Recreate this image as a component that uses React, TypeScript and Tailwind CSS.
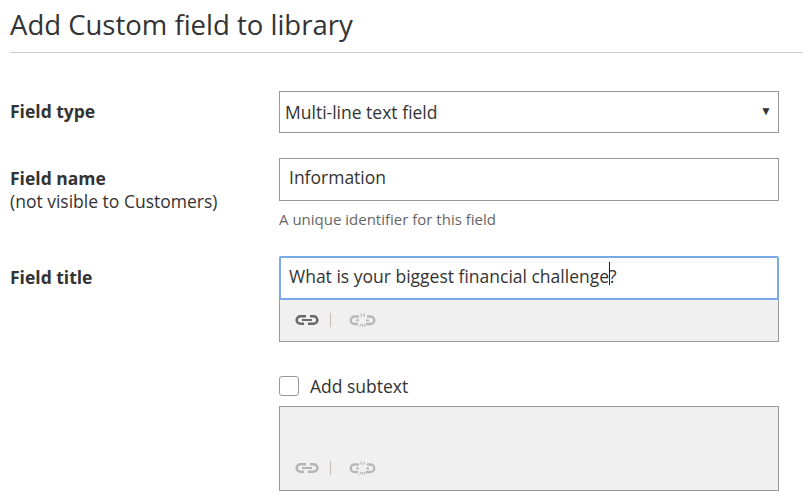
const font = { fontFamily: '"Open Sans", sans-serif' };

function LinkIcon({ className }: { className: string }) {
  return (
    <svg width="24" height="12" viewBox="0 0 24 12" fill="none" className={className}>
      <path d="M11 2.200H5.500a3.800 3.800 0 0 0 0 7.600H9" stroke="currentColor" strokeWidth="2.600" />
      <path d="M13 9.800h5.500a3.800 3.800 0 0 0 0-7.600H15" stroke="currentColor" strokeWidth="2.600" />
      <path d="M7 6h10" stroke="currentColor" strokeWidth="2" />
    </svg>
  );
}

function UnlinkIcon({ className }: { className: string }) {
  return (
    <svg width="27" height="14" viewBox="0 0 27 14" fill="none" className={className}>
      <path d="M10 3.500H5.500a3.500 3.500 0 0 0 0 7.500H9" stroke="currentColor" strokeWidth="2.400" />
      <path d="M17 11h4.500a3.500 3.500 0 0 0 0-7.500H18" stroke="currentColor" strokeWidth="2.400" />
      <path d="M7 7.300h3M17 7.300h3" stroke="currentColor" strokeWidth="1.800" />
      <path d="M12 0.500l.6 3.200M15.500 0.500l-.8 3.200M10.500 13.500l1.500-2.500M16.500 13.500l-1.500-2.500M13.500 11v3" stroke="currentColor" strokeWidth="1.200" />
    </svg>
  );
}

function LinkTools({ dim }: { dim?: boolean }) {
  return (
    <div className="flex items-center">
      <LinkIcon className={dim ? "ml-[15px] text-[#b5b5b5]" : "ml-[15px] text-[#6a6a6a]"} />
      <div className="ml-[11px] h-[14px] w-px bg-[#c4bdb4]" />
      <UnlinkIcon className="ml-[18px] text-[#b8b8b8]" />
    </div>
  );
}

export default function App() {
  return (
    <div className="h-[500px] w-[803px] overflow-hidden bg-white text-[#333]" style={font}>
      <div className="ml-[10px] h-[53px] border-b border-[#cccccc]">
        <h1 className="text-[27.500px] leading-[50px] text-[#333]">Add Custom field to library</h1>
      </div>

      <div className="mt-[38px] flex pl-[10px]">
        <div className="w-[269px] pt-[8px] text-[17.500px] leading-[25px] font-bold">Field type</div>
        <div className="flex h-[42px] w-[500px] items-center justify-between border border-[#999] pr-[6px] pl-[5px] text-[17.500px]">
          <span>Multi-line text field</span>
          <span className="pb-[2px] text-[12px] text-[#333]">▼</span>
        </div>
      </div>

      <div className="mt-[25px] flex pl-[10px]">
        <div className="w-[269px] pt-[9px] text-[17.500px] leading-[23px]">
          <div className="font-bold">Field name</div>
          <div>(not visible to Customers)</div>
        </div>
        <div className="w-[500px]">
          <div className="flex h-[43px] items-center border border-[#999] pb-[5px] pl-[9px] text-[17.500px]">Information</div>
          <p className="mt-[8px] text-[15px] leading-[20px] text-[#666]">A unique identifier for this field</p>
        </div>
      </div>

      <div className="mt-[27px] flex pl-[10px]">
        <div className="w-[269px] pt-[9px] text-[17.500px] leading-[25px] font-bold">Field title</div>
        <div className="w-[500px]">
          <div className="flex h-[44px] items-center rounded-t-[2px] border-2 border-[#7aa9ea] pb-[4px] pl-[8px] text-[17.500px]">
            <span>What is your biggest financial challenge</span>
            <span className="relative">
              <span className="absolute top-[-1px] left-0 h-[23px] w-px bg-[#222]" />?
            </span>
          </div>
          <div className="flex h-[42px] items-center border border-t-0 border-[#999] bg-[#f0f0f0] pb-[2px]">
            <LinkTools />
          </div>

          <label className="mt-[34px] flex h-[20px] items-center">
            <span className="h-[20px] w-[20px] rounded-[3px] border border-[#999] bg-white" />
            <span className="ml-[11px] text-[17.500px]">Add subtext</span>
          </label>

          <div className="mt-[10px] flex h-[85px] items-end border border-[#999] bg-[#f0f0f0] pb-[15px]">
            <LinkTools dim />
          </div>
        </div>
      </div>
    </div>
  );
}
